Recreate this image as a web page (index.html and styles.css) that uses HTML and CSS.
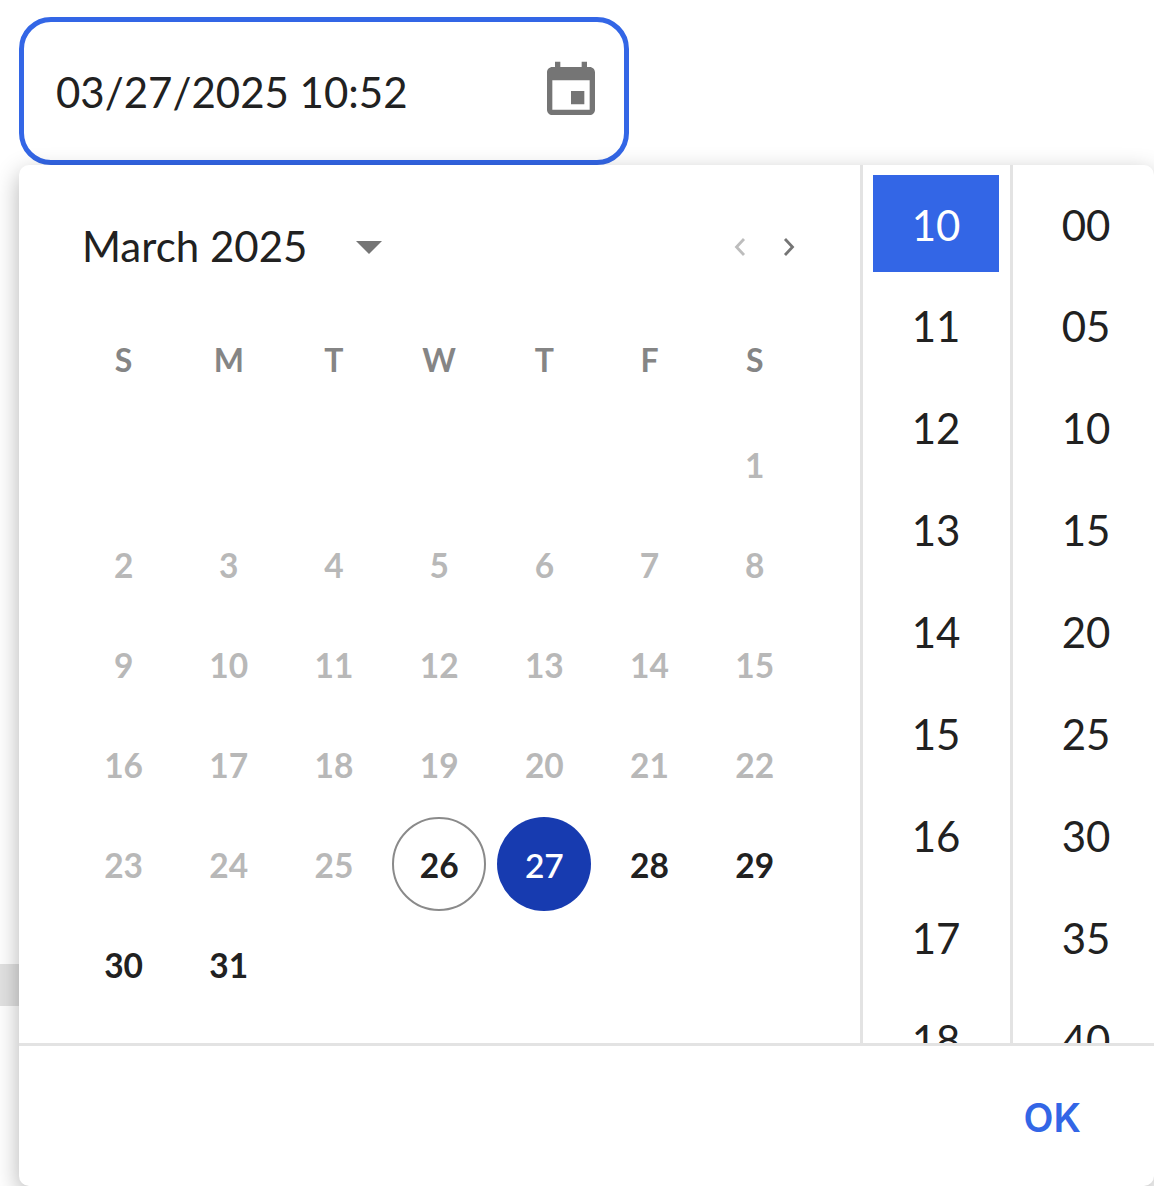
FILE: index.html
```html
<!DOCTYPE html>
<html lang="en">
<head>
<meta charset="utf-8">
<title>Date time picker</title>
<link rel="stylesheet" href="styles.css">
</head>
<body>
<div class="page">
  <div class="field">
    <span class="field-value">03/27/2025 10:52</span>
    <svg class="field-icon" viewBox="0 0 24 24"><path d="M17 12h-5v5h5v-5zM16 1v2H8V1H6v2H5c-1.11 0-1.99.9-1.99 2L3 19c0 1.1.89 2 2 2h14c1.1 0 2-.9 2-2V5c0-1.1-.9-2-2-2h-1V1h-2zm3 18H5V8h14v11z"/></svg>
  </div>
  <div class="backdrop-band"></div>
  <div class="popup">
    <div class="popup-main">
      <div class="calendar">
        <div class="cal-header">
          <span class="cal-title">March 2025</span>
          <svg class="caret" viewBox="0 0 26 13"><path d="M0 0h26L13 13z"/></svg>
          <div class="cal-nav">
            <svg class="chev chev-off" viewBox="0 0 12 20"><path d="M10 2 2.5 10l7.5 8"/></svg>
            <svg class="chev" viewBox="0 0 12 20"><path d="M2 2l7.5 8L2 18"/></svg>
          </div>
        </div>
        <div class="week-head">
          <span>S</span><span>M</span><span>T</span><span>W</span><span>T</span><span>F</span><span>S</span>
        </div>
        <div class="days">
          <span class="day"></span><span class="day"></span><span class="day"></span><span class="day"></span><span class="day"></span><span class="day"></span><span class="day off">1</span>
          <span class="day off">2</span><span class="day off">3</span><span class="day off">4</span><span class="day off">5</span><span class="day off">6</span><span class="day off">7</span><span class="day off">8</span>
          <span class="day off">9</span><span class="day off">10</span><span class="day off">11</span><span class="day off">12</span><span class="day off">13</span><span class="day off">14</span><span class="day off">15</span>
          <span class="day off">16</span><span class="day off">17</span><span class="day off">18</span><span class="day off">19</span><span class="day off">20</span><span class="day off">21</span><span class="day off">22</span>
          <span class="day off">23</span><span class="day off">24</span><span class="day off">25</span><span class="day today">26</span><span class="day selected">27</span><span class="day">28</span><span class="day">29</span>
          <span class="day">30</span><span class="day">31</span>
        </div>
      </div>
      <div class="time-col">
        <div class="time-item active">10</div><div class="time-item">11</div><div class="time-item">12</div><div class="time-item">13</div><div class="time-item">14</div><div class="time-item">15</div><div class="time-item">16</div><div class="time-item">17</div><div class="time-item">18</div>
      </div>
      <div class="time-col">
        <div class="time-item">00</div><div class="time-item">05</div><div class="time-item">10</div><div class="time-item">15</div><div class="time-item">20</div><div class="time-item">25</div><div class="time-item">30</div><div class="time-item">35</div><div class="time-item">40</div>
      </div>
    </div>
    <div class="popup-footer"><span class="ok">OK</span></div>
  </div>
</div>
</body>
</html>
```
FILE: styles.css
```css
* { box-sizing: border-box; }
html, body { margin: 0; padding: 0; height: 100%; background: #fff; overflow: hidden; }
body { font-family: Lato, "Noto Sans", sans-serif; color: #212121; }
.page { position: relative; height: 1186px; padding: 17px 0 0 19px; overflow: hidden; }

.field {
  width: 610px; height: 148px; border: 5px solid #3366e6; border-radius: 32px;
  display: flex; align-items: center; justify-content: space-between;
  padding: 2px 21px 0 32px; background: #fff;
}
.field-value { font-size: 42px; line-height: 1; }
.field-icon { width: 64px; height: 64px; fill: #757575; margin-top: -2px; }

.backdrop-band { position: absolute; left: 0; top: 964px; width: 19px; height: 42px; background: #e2e2e2; }

.popup {
  position: absolute; left: 19px; top: 165px; width: 1135px; height: 1021px;
  background: #fff; border-radius: 10px;
  box-shadow: 0 8px 24px rgba(0,0,0,.3);
  display: flex; flex-direction: column; overflow: hidden;
}
.popup-main { display: flex; height: 878px; overflow: hidden; flex: none; }
.calendar { width: 841px; flex: none; padding: 0 65px 0 52px; }
.cal-header { display: flex; align-items: center; height: 162px; padding: 0 0 0 11px; }
.cal-title { font-size: 42px; line-height: 1; }
.caret { width: 26px; height: 13px; fill: #757575; margin: 2px 0 0 49px; }
.cal-nav { margin: 2px 0 0 auto; display: flex; gap: 37px; }
.chev { width: 12px; height: 20px; fill: none; stroke: #757575; stroke-width: 2.8; }
.chev-off { stroke: #bdbdbd; }

.week-head, .days { display: grid; grid-template-columns: repeat(7, 105.2px); }
.week-head { height: 58px; margin-top: 3px; align-items: center; justify-items: center; font-size: 32px; font-weight: 700; color: #858585; }
.days { grid-auto-rows: 100px; justify-items: center; align-items: center; margin-top: 26px; }
.day { width: 94px; height: 94px; padding-top: 2px; border-radius: 50%; display: flex; align-items: center; justify-content: center; font-size: 33.5px; font-weight: 700; color: #212121; }
.day.off { color: #b8b8b8; }
.day.today { border: 2.5px solid #8a8a8a; }
.day.selected { background: #173bb0; color: #fff; font-weight: 600; }

.time-col { width: 150px; flex: none; border-left: 3px solid #e3e3e3; padding: 10px 0 0 10px; }
.time-item { width: 126px; height: 97px; margin-bottom: 4.9px; padding-top: 2px; display: flex; align-items: center; justify-content: center; font-size: 42px; line-height: 1; }
.time-item.active { background: #3366e6; color: #fff; }

.popup-footer { flex: 1; border-top: 3px solid #e3e3e3; display: flex; justify-content: flex-end; align-items: flex-start; padding: 52px 73px 0 0; }
.ok { font-family: Inter, Lato, sans-serif; font-size: 39px; line-height: 1; font-weight: 600; color: #3366e6; }
```
